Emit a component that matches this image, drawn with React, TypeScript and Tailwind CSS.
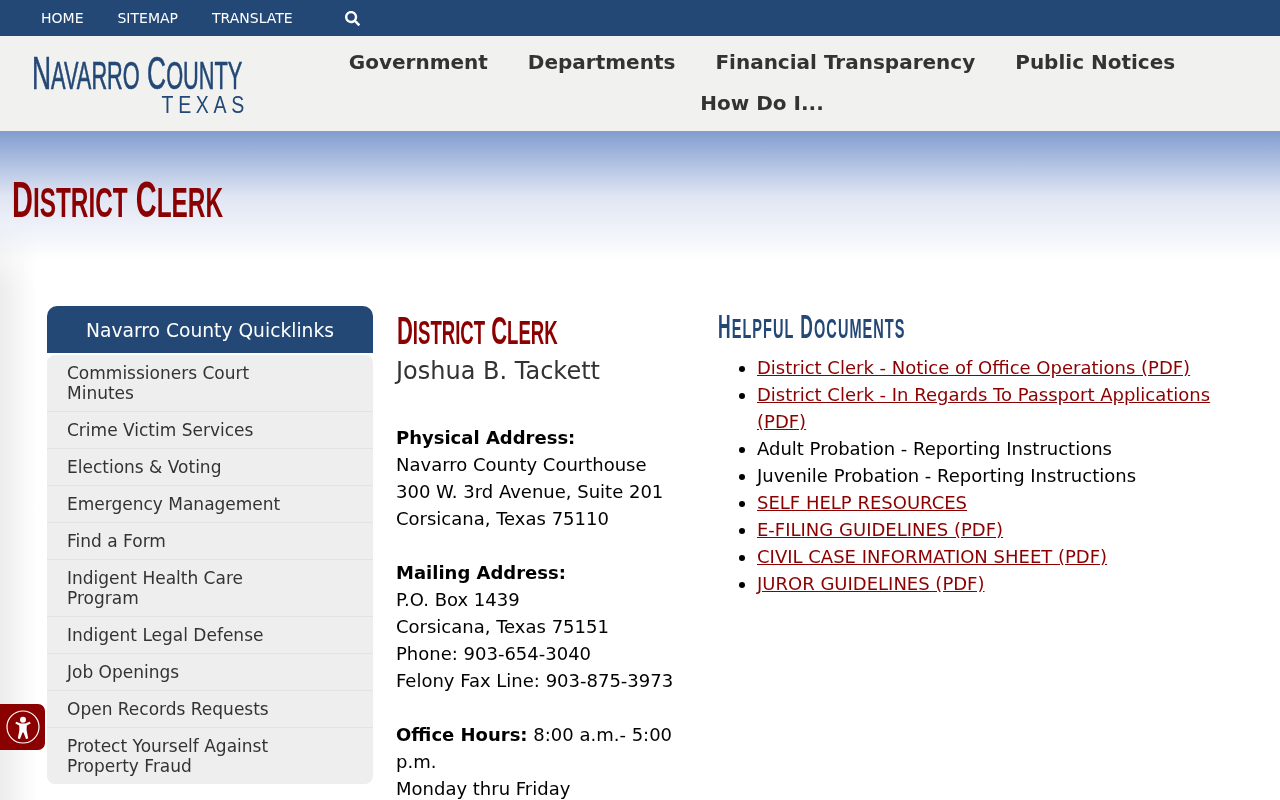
import React from 'react';
import { FaSearch } from 'react-icons/fa';

const navLinks = ['Government', 'Departments', 'Financial Transparency', 'Public Notices', 'How Do I...'];

const quicklinks = [
  ['Commissioners Court', 'Minutes'],
  ['Crime Victim Services'],
  ['Elections & Voting'],
  ['Emergency Management'],
  ['Find a Form'],
  ['Indigent Health Care', 'Program'],
  ['Indigent Legal Defense'],
  ['Job Openings'],
  ['Open Records Requests'],
  ['Protect Yourself Against', 'Property Fraud'],
];

const docs = [
  { text: 'District Clerk - Notice of Office Operations (PDF)', link: true },
  { text: 'District Clerk - In Regards To Passport Applications (PDF)', link: true },
  { text: 'Adult Probation - Reporting Instructions', link: false },
  { text: 'Juvenile Probation - Reporting Instructions', link: false },
  { text: 'SELF HELP RESOURCES', link: true },
  { text: 'E-FILING GUIDELINES (PDF)', link: true },
  { text: 'CIVIL CASE INFORMATION SHEET (PDF)', link: true },
  { text: 'JUROR GUIDELINES (PDF)', link: true },
];

const display = "font-['Liberation_Sans',sans-serif] font-bold whitespace-nowrap origin-left";

// the site's display face has tall small caps, so the tail of each word is set a bit smaller
const Caps: React.FC<{ text: string; size: string }> = ({ text, size }) => (
  <>
    {text.split(' ').map((word, i) => (
      <React.Fragment key={word}>
        {i > 0 && ' '}
        {word[0]}
        <span className={`uppercase ${size}`}>{word.slice(1)}</span>
      </React.Fragment>
    ))}
  </>
);

const App: React.FC = () => {
  return (
    <div className="relative h-[800px] overflow-hidden bg-white font-['DejaVu_Sans',sans-serif] text-[18px] leading-[27px] text-black">
      <div className="flex h-9 items-center bg-[#234876] pl-[41px] text-[14px] text-white">
        <a className="mr-[34px]">HOME</a>
        <a className="mr-[34px]">SITEMAP</a>
        <a className="mr-[52px]">TRANSLATE</a>
        <FaSearch className="h-[15px] w-[15px]" />
      </div>

      <header className="flex h-[95px] bg-[#f1f1ef]">
        <div className="w-[300px] shrink-0 pl-[32px] pt-[14px] text-[#234876]">
          <div className={`${display} h-[46px] scale-x-[0.573] text-[46px] leading-[46px] font-normal [-webkit-text-stroke:0.6px_#234876]`}>
            <Caps text="Navarro County" size="text-[38px]" />
          </div>
          <div className="-mt-[2px] w-[217px] origin-right scale-x-[0.85] text-right font-['Liberation_Sans',sans-serif] text-[23px] leading-[22px] tracking-[5.5px]">TEXAS</div>
        </div>
        <nav className="flex flex-1 flex-wrap content-start justify-center gap-x-10 pr-[56px] pt-[6px] text-[20px] leading-[41px] font-bold text-[#333333]">
          {navLinks.map((link) => (
            <a key={link}>{link}</a>
          ))}
        </nav>
      </header>

      <div className="h-[130px] bg-gradient-to-b from-[#829dcf] via-[#dfe5f3] via-50% to-white pl-[12px] pt-[43px]">
        <h1 className={`${display} h-[52px] scale-x-[0.58] text-[50px] leading-[52px] text-[#8b0000]`}>
          <Caps text="District Clerk" size="text-[42px]" />
        </h1>
      </div>

      <div className="absolute bottom-0 left-0 top-[220px] w-[36px] bg-gradient-to-r from-[#ececec] to-transparent mix-blend-multiply [mask-image:linear-gradient(to_bottom,transparent,black_70px)]" />

      <main className="relative flex pl-[47px] pt-[45px]">
        <aside className="w-[326px] shrink-0">
          <div className="flex h-[47px] items-center justify-center rounded-t-[10px] bg-[#234876] pt-px text-[18.7px] text-white">
            Navarro County Quicklinks
          </div>
          <ul className="mt-[2px] rounded-[8px] bg-[#eeeeee] text-[17px] leading-[20px] text-[#333333]">
            {quicklinks.map((lines, i) => (
              <li key={i} className="border-b border-[#e3e3e3] px-5 py-2 last:border-b-0">
                {lines.map((line) => (
                  <div key={line}>{line}</div>
                ))}
              </li>
            ))}
          </ul>
        </aside>

        <section className="ml-[23px] w-[290px] shrink-0">
          <h2 className={`${display} ml-px h-[49px] scale-x-[0.563] text-[39px] leading-[49px] text-[#8b0000]`}>
            <Caps text="District Clerk" size="text-[33px]" />
          </h2>
          <p className="text-[24px] leading-[32px] text-[#333333]">Joshua B. Tackett</p>
          <p className="mt-[37px]">
            <b>Physical Address:</b><br />
            Navarro County Courthouse<br />
            300 W. 3rd Avenue, Suite 201<br />
            Corsicana, Texas 75110
          </p>
          <p className="mt-[27px]">
            <b>Mailing Address:</b><br />
            P.O. Box 1439<br />
            Corsicana, Texas 75151<br />
            Phone: 903-654-3040<br />
            Felony Fax Line: 903-875-3973
          </p>
          <p className="mt-[27px]">
            <b>Office Hours:</b> 8:00 a.m.- 5:00 p.m.<br />
            Monday thru Friday
          </p>
        </section>

        <section className="ml-[31px] w-[500px] shrink-0">
          <h3 className={`${display} ml-px h-[42px] scale-x-[0.528] text-[33px] leading-[42px] tracking-[2px] text-[#234876]`}>
            <Caps text="Helpful Documents" size="text-[27.5px]" />
          </h3>
          <ul className="mt-[6px] list-disc pl-10">
            {docs.map((doc) => (
              <li key={doc.text}>
                {doc.link ? <a className="text-[#8b0000] underline">{doc.text}</a> : doc.text}
              </li>
            ))}
          </ul>
        </section>
      </main>

      <div className="absolute left-0 top-[704px] flex h-[46px] w-[45px] items-center justify-center rounded-r-[7px] bg-[#8b0000]">
        <svg width="34" height="34" viewBox="0 0 34 34" fill="none" className="text-white">
          <circle cx="17" cy="17" r="16" stroke="currentColor" strokeWidth="1.2" />
          <circle cx="17" cy="9.8" r="3" fill="currentColor" />
          <polygon
            fill="currentColor"
            points="9.4,13.6 10.1,11.8 14.8,13.4 19.2,13.4 23.9,11.8 24.6,13.6 20.8,15.4 20.6,20 22.2,28.4 20,29 17.5,22.4 16.5,22.4 14,29 11.8,28.4 13.4,20 13.2,15.4"
          />
        </svg>
      </div>
    </div>
  );
};

export default App;
